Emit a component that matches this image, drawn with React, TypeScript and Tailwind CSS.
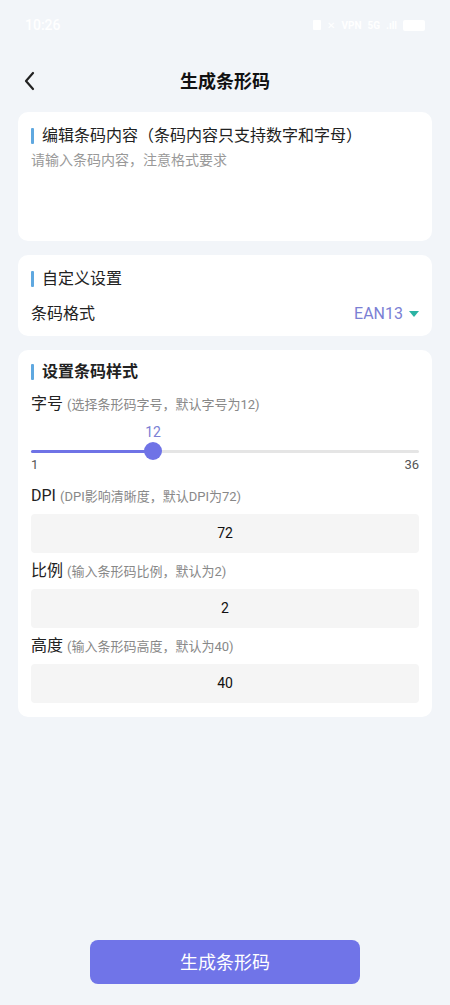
import React, { useState } from 'react';

const font = { fontFamily: 'Roboto, "Noto Sans CJK SC", sans-serif' };

const SectionTitle: React.FC<{ text: string; bold?: boolean }> = ({ text, bold }) => (
  <div className="flex items-center gap-[8px] h-[24px]">
    <span className="w-[3px] h-[16px] bg-[#5fa8e0] rounded-[1px]" />
    <span className={`text-[16px] text-[#222] ${bold ? 'font-bold' : ''}`}>{text}</span>
  </div>
);

const Field: React.FC<{ label: string; hint: string; value: string }> = ({ label, hint, value }) => (
  <div className="flex flex-col">
    <div className="flex items-baseline h-[36px] pt-[6px]">
      <span className="text-[16px] text-[#222]">{label}</span>
      <span className="text-[13px] text-[#888] ml-[4px]">{hint}</span>
    </div>
    <div className="h-[39px] bg-[#f5f5f5] rounded-[4px] flex items-center justify-center text-[14px] text-[#111]">
      {value}
    </div>
  </div>
);

export default function App() {
  const [size] = useState(12);
  const pct = ((size - 1) / 35) * 100;

  return (
    <div className="w-[450px] h-[1005px] bg-[#f2f5f9] flex flex-col" style={font}>
      {/* status bar */}
      <div className="h-[50px] flex items-center justify-between px-[25px] text-white">
        <span className="text-[14px] font-medium">10:26</span>
        <div className="flex items-center gap-[6px]">
          <span className="w-[8px] h-[10px] bg-white rounded-[1px]" />
          <span className="text-[10px]">✕</span>
          <span className="text-[10px] font-bold">VPN</span>
          <span className="text-[10px] font-bold">5G</span>
          <span className="text-[10px] font-bold">.ıll</span>
          <span className="w-[22px] h-[11px] bg-white rounded-[2px]" />
        </div>
      </div>

      {/* header */}
      <div className="h-[62px] flex items-center relative">
        <button className="absolute left-[22px] top-[20px] text-[#222]">
          <svg width="14" height="22" viewBox="0 0 14 22" fill="none" stroke="currentColor" strokeWidth="2.2" strokeLinecap="round" strokeLinejoin="round">
            <path d="M11 3 L4 11 L11 19" />
          </svg>
        </button>
        <div className="flex-1 text-center text-[18px] font-bold text-[#111]">生成条形码</div>
      </div>

      <div className="flex flex-col gap-[14px] px-[18px]">
        {/* card 1 */}
        <div className="bg-white rounded-[10px] h-[129px] px-[13px] pt-[12px]">
          <SectionTitle text="编辑条码内容（条码内容只支持数字和字母）" />
          <div className="text-[14px] text-[#999] mt-[2px]">请输入条码内容，注意格式要求</div>
        </div>

        {/* card 2 */}
        <div className="bg-white rounded-[10px] h-[81px] px-[13px] pt-[12px]">
          <SectionTitle text="自定义设置" />
          <div className="flex items-center justify-between mt-[11px]">
            <span className="text-[16px] text-[#222]">条码格式</span>
            <div className="flex items-center gap-[6px]">
              <span className="text-[16px] text-[#7b7fd4]">EAN13</span>
              <svg width="10" height="7" viewBox="0 0 10 7">
                <path d="M0 0 L10 0 L5 6 Z" fill="#2bb3a3" />
              </svg>
            </div>
          </div>
        </div>

        {/* card 3 */}
        <div className="bg-white rounded-[10px] px-[13px] pt-[10px] pb-[14px]">
          <SectionTitle text="设置条码样式" bold />
          <div className="flex items-baseline h-[34px] pt-[8px]">
            <span className="text-[16px] text-[#222]">字号</span>
            <span className="text-[13px] text-[#888] ml-[4px]">(选择条形码字号，默认字号为12)</span>
          </div>
          <div className="relative h-[60px]">
            <div className="absolute left-[110px] top-[4px] w-[24px] text-center text-[14px] text-[#7b7fd4]">{size}</div>
            <div className="absolute left-0 right-0 top-[32px] h-[3px] bg-[#e5e5e5] rounded-full" />
            <div className="absolute left-0 top-[32px] h-[3px] bg-[#6f73e6] rounded-full" style={{ width: `${pct}%` }} />
            <div className="absolute top-[24px] w-[18px] h-[18px] rounded-full bg-[#6f73e6]" style={{ left: `calc(${pct}% - 9px)` }} />
            <div className="absolute left-0 top-[37px] text-[13px] text-[#555]">1</div>
            <div className="absolute right-0 top-[37px] text-[13px] text-[#555]">36</div>
          </div>
          <Field label="DPI" hint="(DPI影响清晰度，默认DPI为72)" value="72" />
          <Field label="比例" hint="(输入条形码比例，默认为2)" value="2" />
          <Field label="高度" hint="(输入条形码高度，默认为40)" value="40" />
        </div>
      </div>

      <div className="flex-1" />
      <div className="flex justify-center pb-[21px]">
        <button className="w-[270px] h-[44px] rounded-[8px] bg-[#7074e8] text-white text-[18px]">生成条形码</button>
      </div>
    </div>
  );
}
